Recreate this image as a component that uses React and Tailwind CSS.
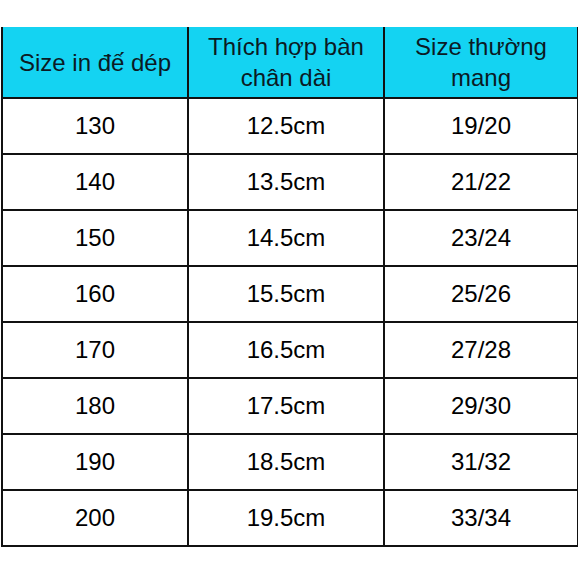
const header = ['Size in đế dép', 'Thích hợp bàn\nchân dài', 'Size thường\nmang'];

const rows = [
  ['130', '12.5cm', '19/20'],
  ['140', '13.5cm', '21/22'],
  ['150', '14.5cm', '23/24'],
  ['160', '15.5cm', '25/26'],
  ['170', '16.5cm', '27/28'],
  ['180', '17.5cm', '29/30'],
  ['190', '18.5cm', '31/32'],
  ['200', '19.5cm', '33/34'],
];

export default function App() {
  return (
    <div
      className="h-[578px] w-[578px] bg-white pl-[1px] pt-[27px]"
      style={{ fontFamily: '"Liberation Sans", Arial, sans-serif' }}
    >
      <div className="grid w-[576px] grid-cols-[186px_196px_194px] border-l-2 border-[#111]">
        {header.map((h) => (
          <div
            key={h}
            className="flex h-[72px] items-center justify-center whitespace-pre-line border-b-2 border-r-2 border-[#111] bg-[#14d3f2] text-center text-[24px] leading-[31px] text-[#0b1a24]"
          >
            {h}
          </div>
        ))}
        {rows.map((r) =>
          r.map((c, i) => (
            <div
              key={r[0] + i}
              className="flex h-[56px] items-center justify-center border-b-2 border-r-2 border-[#111] text-[24px] text-black"
            >
              {c}
            </div>
          ))
        )}
      </div>
    </div>
  );
}
